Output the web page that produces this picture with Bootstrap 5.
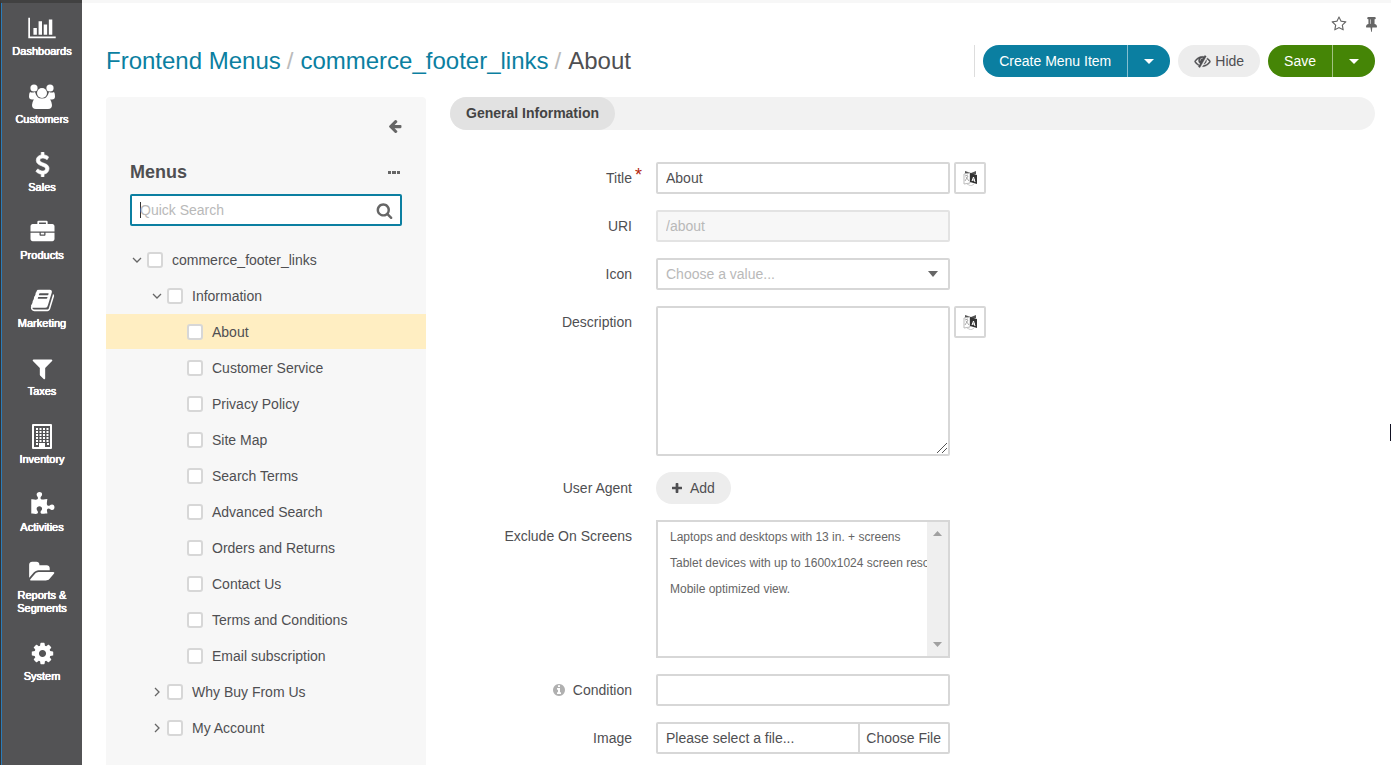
<!DOCTYPE html>
<html lang="en">
<head>
<meta charset="utf-8">
<meta name="viewport" content="width=device-width, initial-scale=1">
<title>About - commerce_footer_links - Frontend Menus</title>
<link href="https://cdn.jsdelivr.net/npm/bootstrap@5.3.0/dist/css/bootstrap.min.css" rel="stylesheet">
<style>
:root { --ink:#4f4f52; --line:#d7d7d7; --blue:#0b7fa1; --green:#458506; --soft:#f7f7f7; --pill:#ededed; }
body { font-family:"Liberation Sans",Arial,sans-serif; font-size:14px; line-height:20px; color:var(--ink); }
svg { display:block; fill:currentColor; }
.app { min-height:100vh; }
.main-menu { width:82px; background:#535355; border-top:3px solid #414141; border-left:1px solid #333; box-shadow:inset 1px 0 #2b7cba; padding-top:12px; }
.main-menu a { color:#fff; font-size:11px; line-height:13px; text-shadow:0 0 currentColor, 0 0 currentColor, 0 0 1px currentColor; padding:0 8px 25px 9px; }
.main-menu .glyph { height:26px; margin-bottom:4px; }
.page { border-top:3px solid var(--soft); padding:0 16px 0 24px; }
.page-tools { height:42px; gap:19px; margin-right:-2px; color:#6b6b6e; }
.tool { border:0; background:none; padding:0; color:#666; }
.crumbs { font-size:24px; line-height:32px; }
.crumbs a { color:var(--blue); text-decoration:none; }
.crumbs .sep { color:#bbb; padding:0 7px 0 6px; }
.page-title { min-height:32px; margin-bottom:20px; }
.btn { --bs-btn-font-size:14px; --bs-btn-line-height:20px; --bs-btn-padding-y:6px; --bs-btn-padding-x:16px; --bs-btn-border-width:0px; --bs-btn-border-radius:16px; }
.btn-create { --bs-btn-color:#fff; --bs-btn-bg:var(--blue); --bs-btn-hover-color:#fff; --bs-btn-hover-bg:#096a87; }
.btn-save { --bs-btn-color:#fff; --bs-btn-bg:var(--green); --bs-btn-hover-color:#fff; --bs-btn-hover-bg:#396e05; }
.btn-plain { --bs-btn-color:var(--ink); --bs-btn-bg:var(--pill); --bs-btn-hover-bg:#ddd; }
.btn-drop { --bs-btn-padding-x:16px; border-left:1px solid #ffffff80 !important; }
.btn-group > .btn-drop { margin-left:0 !important; }
.title-actions { border-left:1px solid #ddd; padding-left:8px; }
.menus { width:320px; background:var(--soft); border-radius:4px 4px 0 0; padding-top:19px; }
.menus-bar { padding:0 24px; }
.menus h2 { font-size:18px; line-height:24px; font-weight:700; }
.menus-head { margin-bottom:10px; }
.field { height:32px; border:2px solid var(--line); border-radius:2px; padding:4px 8px; font-size:14px; line-height:20px; color:var(--ink); background-color:#fff; }
.field::placeholder { color:#b9b9b9; opacity:1; }
.field:disabled { background:var(--soft); color:#b9b9b9; border-color:#e3e3e3; opacity:1; }
.field:focus { box-shadow:none; border-color:var(--blue); }
.search-field { border-color:var(--blue); background:#fff linear-gradient(#333,#333) 8px center/1px 16px no-repeat; caret-color:transparent; }
.search-btn { right:9px; top:8px; }
.tree { margin-top:16px; }
.tree li { height:36px; border-bottom:1px solid transparent; background-clip:padding-box; }
.tree .lvl-1 { padding-left:24px; } .tree .lvl-2 { padding-left:44px; } .tree .lvl-3 { padding-left:81px; }
.tree .current { background-color:#ffeec2; }
.twist { width:14px; margin-right:3px; color:#666; }
.twist svg { margin:auto; fill:none; stroke:currentColor; stroke-width:1.3; }
.tree .form-check-input { width:16px; height:16px; border:2px solid var(--line); border-radius:3px; margin:0 9px 0 0; background-color:#fff; flex:none; }
.tabs { height:33px; background:#f2f2f2; border-radius:17px; margin-bottom:32px; }
.tabs a { background:#e2e2e2; color:#444; font-weight:700; border-radius:17px; padding:6px 16px; line-height:21px; text-decoration:none; }
.entry { display:grid; grid-template-columns:182px minmax(0,294px) auto; column-gap:24px; align-items:start; margin-bottom:16px; }
.entry > .caption { text-align:right; padding-top:6px; }
.entry .aside { margin-left:-20px; }
.field-full { width:100%; }
.need { color:#b3260d; font-size:18px; line-height:20px; position:absolute; left:100%; top:-5px; padding-left:3px; }
.square { width:32px; height:32px; border:2px solid var(--line); background:#fff; padding:0 0 0 7px; color:#333; border-radius:2px; }
.pick { appearance:none; color:#b9b9b9; background:#fff url("data:image/svg+xml,%3Csvg xmlns='http://www.w3.org/2000/svg' width='10' height='6'%3E%3Cpath d='M0 0h10L5 6z' fill='%23666'/%3E%3C/svg%3E") right 10px center no-repeat; }
textarea.field { height:150px; display:block; }
textarea.field::-webkit-resizer { background:url("data:image/svg+xml,%3Csvg xmlns='http://www.w3.org/2000/svg' width='12' height='12'%3E%3Cpath d='M1 11L11 1M6 11l5-5' stroke='%23555'/%3E%3C/svg%3E") right bottom no-repeat; }
.screens { height:138px; font-size:12px; padding:5px 0 0; display:block; color:#666; border-radius:0; }
.screens option { padding:3px 12px; line-height:20px; height:26px; min-height:26px; }
.rail { top:2px; right:2px; bottom:2px; width:21px; background:#efefef; color:#a0a0a0; padding:9px 6px; pointer-events:none; }
.file-box { padding:0; cursor:pointer; }
.file-box span { padding:4px 8px; }
.file-box .choose { border-left:2px solid var(--line); padding:4px 7px 4px 6px; white-space:nowrap; }
.pointer { right:0; top:424px; width:1px; height:17px; background:#112; }
</style>
</head>
<body>
<svg class="d-none"><symbol id="translate" viewBox="0 0 15 16"><path d="M2 1l6 2 5-2v3l-5 1-6-1z" fill="#555"/><path d="M1 4l6-1v10l-6 1z" fill="#fff" stroke="#bbb"/><path d="M2 6l3-1M3 7l3 4M5 6l-3 5" fill="none" stroke="#aaa"/><path d="M7 3l7 2v9l-7-2z" fill="#333"/><path d="M9 11l1.500-4 1.500 5M9 10h3" fill="none" stroke="#fff"/><path d="M4 14l4 2 3-2" fill="none" stroke="#ccc"/></symbol></svg>
<div class="app d-flex position-relative">
  <nav class="main-menu flex-shrink-0 d-flex flex-column text-center" aria-label="Main">
    <a href="#" class="text-decoration-none"><span class="glyph d-flex align-items-center justify-content-center"><svg width="28" height="24" viewBox="0 0 2048 1792"><path d="M640 896v512h-256v-512h256zM1024 384v1024h-256v-1024h256zM2048 1536v128h-2048v-1536h128v1408h1920zM1408 640v768h-256v-768h256zM1792 256v1152h-256v-1152h256z"/></svg></span>Dashboards</a>
    <a href="#" class="text-decoration-none"><span class="glyph d-flex align-items-center justify-content-center"><svg width="26" height="25" viewBox="0 0 26 25"><circle cx="5" cy="4" r="3.600"/><circle cx="21" cy="4" r="3.600"/><path d="M1 8q2 1 5 0 1 4 3 5.500-2 .5-3 2H3q-3 0-3-3Q0 9 1 8zM25 8q-2 1-5 0-1 4-3 5.500 2 .5 3 2h3q3 0 3-3 0-3.500-1-4.500z"/><circle cx="13" cy="9" r="5"/><path d="M8 13q5 3 10 0 4 1 5 8 0 4-4 4H7q-4 0-4-4 1-7 5-8z"/></svg></span>Customers</a>
    <a href="#" class="text-decoration-none"><span class="glyph d-flex align-items-center justify-content-center"><svg width="25" height="25" viewBox="0 0 1792 1792" stroke="currentColor" stroke-width="50"><path d="M1362 1185q0 153-99.500 263.500t-258.500 136.500v175q0 14-9 23t-23 9h-135q-13 0-22.500-9.500t-9.500-22.500v-175q-66-9-127.500-31t-101.500-44.500-74-48-46.500-37.500-17.500-18q-17-21-2-41l103-135q7-10 23-12 15-2 24 9l2 2q113 99 243 125 37 8 74 8 81 0 142.500-43t61.500-122q0-28-15-53t-33.500-42-58.500-37.500-66-32-80-32.500q-39-16-61.500-25t-61.500-26.500-62.500-31-56.500-35.500-53.500-42.500-43.500-49-35.500-58-21-66.500-8.500-78q0-138 98-242t255-134v-180q0-13 9.500-22.500t22.500-9.500h135q14 0 23 9t9 23v176q57 6 110.500 23t87 33.500 63.500 37.500 39 29 15 14q17 18 5 38l-81 146q-8 15-23 16-14 3-27-7-3-3-14.500-12t-39-26.500-58.500-32-74.500-26-85.500-11.500q-95 0-155 43t-60 111q0 26 8.500 48t29.500 41.500 39.500 33 56 31 60.500 27 70 27.500q53 20 81 31.500t76 35 75.500 42.500 62 50 53 63.500 31.500 76.500 13 94z"/></svg></span>Sales</a>
    <a href="#" class="text-decoration-none"><span class="glyph d-flex align-items-center justify-content-center"><svg width="25" height="24" viewBox="0 -50 1792 1792"><path d="M640 256h512v-128h-512v128zM1792 896v480q0 66-47 113t-113 47h-1472q-66 0-113-47t-47-113v-480h672v160q0 26 19 45t45 19h320q26 0 45-19t19-45v-160h672zM1024 896v128h-256v-128h256zM1792 416v384h-1792v-384q0-66 47-113t113-47h352v-160q0-40 28-68t68-28h576q40 0 68 28t28 68v160h352q66 0 113 47t47 113z"/></svg></span>Products</a>
    <a href="#" class="text-decoration-none"><span class="glyph d-flex align-items-center justify-content-center"><svg width="25" height="25" viewBox="0 0 1792 1792"><path d="M1703 478q40 57 18 129l-275 906q-19 64-76.500 107.500t-122.500 43.500h-923q-77 0-148.500-53.500t-99.500-131.500q-24-67-2-127 0-4 3-27t4-37q1-8-3-21.500t-3-19.500q2-11 8-21t16.500-23.500 16.500-23.500q23-38 45-91.500t30-91.500q3-10 .5-30t-.5-28q3-11 17-28t17-23q21-36 42-92t25-90q1-9-2.500-32t.5-28q4-13 22-30.500t22-22.500q19-26 42.500-84.500t27.500-96.500q1-8-3-25.500t-2-26.500q2-8 9-18t18-23 17-21q8-12 16.500-30.500t15-35 16-36 19.500-32 26.500-23.500 36-11.500 47.500 5.500l-1 3q38-9 51-9h761q74 0 114 56t18 130l-274 906q-36 119-71.500 153.500t-128.500 34.500h-869q-27 0-38 15-11 16-1 43 24 70 144 70h923q29 0 56-15.500t35-41.500l300-987q7-22 5-57 38 15 59 43zm-1064 2q-4 13 2 22.500t20 9.500h608q13 0 25.500-9.500t16.500-22.500l21-64q4-13-2-22.500t-20-9.500h-608q-13 0-25.500 9.500t-16.500 22.500zm-83 256q-4 13 2 22.500t20 9.500h608q13 0 25.500-9.500t16.500-22.500l21-64q4-13-2-22.500t-20-9.500h-608q-13 0-25.500 9.500t-16.500 22.500z"/></svg></span>Marketing</a>
    <a href="#" class="text-decoration-none"><span class="glyph d-flex align-items-center justify-content-center"><svg width="25" height="25" viewBox="0 0 1792 1792"><path d="M1595 295q17 41-14 70l-493 493v742q0 42-39 59-13 5-25 5-27 0-45-19l-256-256q-19-19-19-45v-486l-493-493q-31-29-14-70 17-39 59-39h1280q42 0 59 39z"/></svg></span>Taxes</a>
    <a href="#" class="text-decoration-none"><span class="glyph d-flex align-items-center justify-content-center"><svg width="20" height="25" viewBox="0 0 20 25"><path fill-rule="evenodd" d="M1 0h18q1 0 1 1v23q0 1-1 1H1q-1 0-1-1V1q0-1 1-1zM2 2v21h5v-4h6v4h5V2z"/><path d="M4 5h13M4 8h13M4 11h13M4 14h13M4 17h13" stroke="currentColor" stroke-width="2" stroke-dasharray="2 1.500"/><path d="M4 20h2M15 20h2" stroke="currentColor" stroke-width="2"/></svg></span>Inventory</a>
    <a href="#" class="text-decoration-none"><span class="glyph d-flex align-items-center justify-content-center"><svg width="25" height="25" viewBox="0 0 1792 1792"><path d="M1755 1098q0 81-44.500 135t-123.500 54q-41 0-77.500-17.500t-59-38-56.500-38-71-17.500q-110 0-110 124 0 39 16 115t15 115v5q-22 0-33 1-34 3-97.500 11.500t-115.500 13.500-98 5q-61 0-103-26.500t-42-83.500q0-37 17.500-71t38-56.500 38-59 17.500-77.500q0-79-54-123.500t-135-44.500q-84 0-143 45.500t-59 127.500q0 43 15 83t33.500 64.500 33.500 53 15 50.500q0 45-46 89-37 35-117 35-95 0-245-24-9-2-27.500-4t-27.500-4l-13-2q-1 0-3-1-2 0-2-1v-1024q2 1 17.500 3.500t34 5 21.500 3.500q150 24 245 24 80 0 117-35 46-44 46-89 0-22-15-50.500t-33.500-53-33.500-64.500-15-83q0-82 59-127.500t144-45.500q80 0 134 44.500t54 123.500q0 41-17.500 77.500t-38 59-38 56.500-17.500 71q0 57 42 83.500t103 26.500q64 0 180-15t163-17v2q-1 2-3.500 17.500t-5 34-3.500 21.500q-24 150-24 245 0 80 35 117 44 46 89 46 22 0 50.500-15t53-33.500 64.500-33.500 83-15q82 0 127.500 59t45.500 143z"/></svg></span>Activities</a>
    <a href="#" class="text-decoration-none"><span class="glyph d-flex align-items-center justify-content-center"><svg width="26" height="24" viewBox="0 0 1920 1792"><path d="M1879 952q0 31-31 66l-336 396q-43 51-120.500 86.500t-143.500 35.500h-1088q-34 0-60.500-13t-26.500-43q0-31 31-66l336-396q43-51 120.500-86.500t143.500-35.500h1088q34 0 60.500 13t26.500 43zM1536 608v160h-832q-94 0-197 47.500t-164 119.500l-337 396-5 6q0-4-.5-12.500t-.5-12.500v-960q0-92 66-158t158-66h320q92 0 158 66t66 158v32h544q92 0 158 66t66 158z"/></svg></span>Reports &amp;<br>Segments</a>
    <a href="#" class="text-decoration-none"><span class="glyph d-flex align-items-center justify-content-center"><svg width="25" height="25" viewBox="0 0 1792 1792"><path d="M1152 896q0-106-75-181t-181-75-181 75-75 181 75 181 181 75 181-75 75-181zm512-109v222q0 12-8 23t-20 13l-185 28q-19 54-39 91 35 50 107 138 10 12 10 25t-9 23q-27 37-99 108t-94 71q-12 0-26-9l-138-108q-44 23-91 38-16 136-29 186-7 28-36 28h-222q-14 0-24.500-8.500t-11.500-21.500l-28-184q-49-16-90-37l-141 107q-10 9-25 9-14 0-25-11-126-114-165-168-7-10-7-23 0-12 8-23 15-21 51-66.500t54-70.500q-27-50-41-99l-183-27q-13-2-21-12.500t-8-23.500v-222q0-12 8-23t19-13l186-28q14-46 39-92-40-57-107-138-10-12-10-24 0-10 9-23 26-36 98.500-107.500t94.500-71.500q13 0 26 10l138 107q44-23 91-38 16-136 29-186 7-28 36-28h222q14 0 24.500 8.500t11.500 21.500l28 184q49 16 90 37l142-107q9-9 24-9 13 0 25 10 129 119 165 170 7 8 7 22 0 12-8 23-15 21-51 66.500t-54 70.500q26 50 41 98l183 28q13 2 21 12.500t8 23.500z"/></svg></span>System</a>
  </nav>

  <main class="page flex-grow-1 d-flex flex-column">
    <div class="page-tools d-flex justify-content-end align-items-center">
      <button type="button" class="tool" aria-label="Add to favorites"><svg width="16" height="16" viewBox="0 0 1792 1792"><path d="M1201 1004l306-297-422-62-189-382-189 382-422 62 306 297-73 421 378-199 377 199zm527-357q0 22-26 48l-363 354 86 500q1 7 1 20 0 50-41 50-19 0-40-12l-449-236-449 236q-22 12-40 12-21 0-31.500-14.500t-10.500-35.500q0-6 2-20l86-500-364-354q-25-27-25-48 0-37 56-46l502-73 225-455q19-41 49-41t49 41l225 455 502 73q56 9 56 46z"/></svg></button>
      <button type="button" class="tool" aria-label="Pin page"><svg width="11" height="15" viewBox="320 128 1152 1664" preserveAspectRatio="none"><path d="M800 864v-448q0-14-9-23t-23-9-23 9-9 23v448q0 14 9 23t23 9 23-9 9-23zm672 352q0 26-19 45t-45 19h-429l-51 483q-2 12-10.500 20.500t-20.500 8.500h-1q-27 0-32-27l-76-485h-404q-26 0-45-19t-19-45q0-123 78.500-221.500t177.500-98.500v-512q-52 0-90-38t-38-90 38-90 90-38h640q52 0 90 38t38 90-38 90-90 38v512q99 0 177.500 98.500t78.500 221.500z"/></svg></button>
    </div>

    <header class="page-title d-flex justify-content-between">
      <nav class="crumbs d-flex" aria-label="Breadcrumb"><a href="#">Frontend Menus</a><span class="sep">/</span><a href="#">commerce_footer_links</a><span class="sep">/</span><span>About</span></nav>
      <div class="title-actions d-flex gap-2">
        <div class="btn-group">
          <button type="button" class="btn btn-create">Create Menu Item</button>
          <button type="button" class="btn btn-create btn-drop" aria-label="More create options"><svg width="10" height="5" viewBox="0 0 10 5"><path d="M0 0h10L5 5z"/></svg></button>
        </div>
        <button type="button" class="btn btn-plain d-flex align-items-center"><svg class="me-1" width="17" height="16" viewBox="0 0 1792 1792" stroke="currentColor" stroke-width="40"><path d="M555 1335l78-141q-87-63-136-159t-49-203q0-121 61-225-229 117-381 353 167 258 427 375zM944 576q0-20-14-34t-34-14q-125 0-214.500 89.500t-89.500 214.500q0 20 14 34t34 14 34-14 14-34q0-86 61-147t147-61q20 0 34-14t14-34zM1307 377q0 7-1 9-106 189-316 567t-315 566l-49 89q-10 16-28 16-12 0-134-70-16-10-16-28 0-12 44-87-143-65-263.500-173t-208.500-245q-20-31-20-69t20-69q153-235 380-371t496-136q89 0 180 17l54-97q10-16 28-16 5 0 18 6t31 15.500 33 18.500 31.500 18.500 19.500 11.500q16 10 16 27zM1344 832q0 139-79 253.500t-209 164.500l280-502q8 45 8 84zM1792 960q0 35-20 69-39 64-109 145-150 172-347.500 267t-419.500 95l74-132q212-18 392.500-137t301.500-307q-115-179-282-294l63-112q95 64 182.500 153t144.500 184q20 34 20 69z"/></svg>Hide</button>
        <div class="btn-group">
          <button type="button" class="btn btn-save">Save</button>
          <button type="button" class="btn btn-save btn-drop" aria-label="More save options"><svg width="10" height="5" viewBox="0 0 10 5"><path d="M0 0h10L5 5z"/></svg></button>
        </div>
      </div>
    </header>

    <div class="d-flex flex-grow-1 gap-4">
      <aside class="menus flex-shrink-0">
        <div class="menus-bar d-flex justify-content-end pb-4"><button type="button" class="tool" aria-label="Collapse panel"><svg width="14" height="20" viewBox="64 0 1664 1792"><path d="M1664 896v128q0 53-32.500 90.500t-84.500 37.500h-704l293 294q38 36 38 90t-38 90l-75 76q-37 37-90 37-52 0-91-37l-651-652q-37-37-37-90 0-52 37-91l651-650q38-38 91-38 52 0 90 38l75 74q38 38 38 91t-38 91l-293 293h704q52 0 84.500 37.500t32.500 90.500z"/></svg></button></div>
        <div class="menus-bar menus-head d-flex justify-content-between align-items-center">
          <h2 class="m-0">Menus</h2>
          <button type="button" class="tool" aria-label="Menu actions"><svg width="15" height="4" viewBox="0 0 15 4"><path d="M1 1h3v3H1zM5 1h4v3H5zM10 1h3v3h-3z"/></svg></button>
        </div>
        <div class="menus-bar"><div class="position-relative">
          <input type="text" class="field field-full search-field" placeholder="Quick Search" aria-label="Quick Search">
          <button type="button" class="tool search-btn position-absolute" aria-label="Search"><svg width="17" height="17" viewBox="0 0 1792 1792"><path d="M1216 832q0-185-131.500-316.500t-316.500-131.500-316.500 131.500-131.500 316.500 131.500 316.500 316.500 131.500 316.500-131.500 131.500-316.500zm512 832q0 52-38 90t-90 38q-54 0-90-38l-343-342q-179 124-399 124-143 0-273.500-55.500t-225-150-150-225-55.500-273.500 55.500-273.500 150-225 225-150 273.500-55.500 273.500 55.500 225 150 150 225 55.500 273.500q0 220-124 399l343 343q37 37 37 90z"/></svg></button>
        </div></div>
        <ul class="tree list-unstyled mb-0">
          <li class="lvl-1 d-flex align-items-center"><button type="button" class="tool twist" aria-label="Collapse"><svg width="10" height="6" viewBox="0 0 10 6"><path d="M1 1l4 4 4-4"/></svg></button><input class="form-check-input" type="checkbox" id="n1"><label for="n1">commerce_footer_links</label></li>
          <li class="lvl-2 d-flex align-items-center"><button type="button" class="tool twist" aria-label="Collapse"><svg width="10" height="6" viewBox="0 0 10 6"><path d="M1 1l4 4 4-4"/></svg></button><input class="form-check-input" type="checkbox" id="n2"><label for="n2">Information</label></li>
          <li class="lvl-3 current d-flex align-items-center"><input class="form-check-input" type="checkbox" id="n3"><label for="n3">About</label></li>
          <li class="lvl-3 d-flex align-items-center"><input class="form-check-input" type="checkbox" id="n4"><label for="n4">Customer Service</label></li>
          <li class="lvl-3 d-flex align-items-center"><input class="form-check-input" type="checkbox" id="n5"><label for="n5">Privacy Policy</label></li>
          <li class="lvl-3 d-flex align-items-center"><input class="form-check-input" type="checkbox" id="n6"><label for="n6">Site Map</label></li>
          <li class="lvl-3 d-flex align-items-center"><input class="form-check-input" type="checkbox" id="n7"><label for="n7">Search Terms</label></li>
          <li class="lvl-3 d-flex align-items-center"><input class="form-check-input" type="checkbox" id="n8"><label for="n8">Advanced Search</label></li>
          <li class="lvl-3 d-flex align-items-center"><input class="form-check-input" type="checkbox" id="n9"><label for="n9">Orders and Returns</label></li>
          <li class="lvl-3 d-flex align-items-center"><input class="form-check-input" type="checkbox" id="n10"><label for="n10">Contact Us</label></li>
          <li class="lvl-3 d-flex align-items-center"><input class="form-check-input" type="checkbox" id="n11"><label for="n11">Terms and Conditions</label></li>
          <li class="lvl-3 d-flex align-items-center"><input class="form-check-input" type="checkbox" id="n12"><label for="n12">Email subscription</label></li>
          <li class="lvl-2 d-flex align-items-center"><button type="button" class="tool twist" aria-label="Expand"><svg width="6" height="10" viewBox="0 0 6 10"><path d="M1 1l4 4-4 4"/></svg></button><input class="form-check-input" type="checkbox" id="n13"><label for="n13">Why Buy From Us</label></li>
          <li class="lvl-2 d-flex align-items-center"><button type="button" class="tool twist" aria-label="Expand"><svg width="6" height="10" viewBox="0 0 6 10"><path d="M1 1l4 4-4 4"/></svg></button><input class="form-check-input" type="checkbox" id="n14"><label for="n14">My Account</label></li>
        </ul>
      </aside>

      <section class="flex-grow-1">
        <nav class="tabs d-flex" aria-label="Sections"><a href="#">General Information</a></nav>
        <form>
          <div class="entry"><label class="caption" for="title"><span class="position-relative">Title<span class="need">*</span></span></label><input id="title" type="text" class="field field-full" value="About">
            <div class="aside d-flex"><button type="button" class="square" aria-label="Translate title"><svg width="15" height="16"><use href="#translate"/></svg></button></div></div>
          <div class="entry"><label class="caption" for="uri">URI</label><input id="uri" type="text" class="field field-full" value="/about" disabled></div>
          <div class="entry"><label class="caption" for="icon">Icon</label><select id="icon" class="field field-full pick"><option>Choose a value...</option></select></div>
          <div class="entry"><label class="caption" for="desc">Description</label><textarea id="desc" class="field field-full"></textarea>
            <div class="aside d-flex"><button type="button" class="square" aria-label="Translate description"><svg width="15" height="16"><use href="#translate"/></svg></button></div></div>
          <div class="entry"><span class="caption">User Agent</span><div class="d-flex"><button type="button" class="btn btn-plain d-flex align-items-center"><svg class="me-2" width="10" height="10" viewBox="192 128 1408 1408"><path d="M1600 736v192q0 40-28 68t-68 28h-416v416q0 40-28 68t-68 28h-192q-40 0-68-28t-28-68v-416h-416q-40 0-68-28t-28-68v-192q0-40 28-68t68-28h416v-416q0-40 28-68t68-28h192q40 0 68 28t28 68v416h416q40 0 68 28t28 68z"/></svg>Add</button></div></div>
          <div class="entry"><label class="caption" for="screens">Exclude On Screens</label>
            <div class="position-relative"><select id="screens" class="field field-full screens" multiple><option>Laptops and desktops with 13 in. + screens</option><option>Tablet devices with up to 1600x1024 screen resolution</option><option>Mobile optimized view.</option></select>
              <div class="rail position-absolute d-flex flex-column justify-content-between" aria-hidden="true"><svg width="9" height="5" viewBox="0 0 9 5"><path d="M0 5h9L4.500 0z"/></svg><svg width="9" height="5" viewBox="0 0 9 5"><path d="M0 0h9L4.500 5z"/></svg></div></div></div>
          <div class="entry"><label for="cond" class="caption d-flex justify-content-end align-items-center gap-2"><svg width="12" height="12" viewBox="128 128 1536 1536" color="#b0b0b0"><path d="M1152 1376v-160q0-14-9-23t-23-9h-96v-512q0-14-9-23t-23-9h-320q-14 0-23 9t-9 23v160q0 14 9 23t23 9h96v320h-96q-14 0-23 9t-9 23v160q0 14 9 23t23 9h448q14 0 23-9t9-23zm-128-896v-160q0-14-9-23t-23-9h-192q-14 0-23 9t-9 23v160q0 14 9 23t23 9h192q14 0 23-9t9-23zm640 416q0 209-103 385.500t-279.500 279.500-385.500 103-385.500-103-279.500-279.500-103-385.500 103-385.500 279.500-279.500 385.500-103 385.500 103 279.500 279.500 103 385.500z"/></svg>Condition</label><input id="cond" type="text" class="field field-full"></div>
          <div class="entry mb-0"><label class="caption" for="image">Image</label><label class="field file-box d-flex position-relative" for="image"><span class="flex-grow-1">Please select a file...</span><span class="choose">Choose File</span><input type="file" id="image" class="visually-hidden"></label></div>
        </form>
      </section>
    </div>
  </main>
  <div class="pointer position-absolute"></div>
</div>
<script src="https://cdn.jsdelivr.net/npm/bootstrap@5.3.0/dist/js/bootstrap.bundle.min.js"></script>
</body>
</html>
